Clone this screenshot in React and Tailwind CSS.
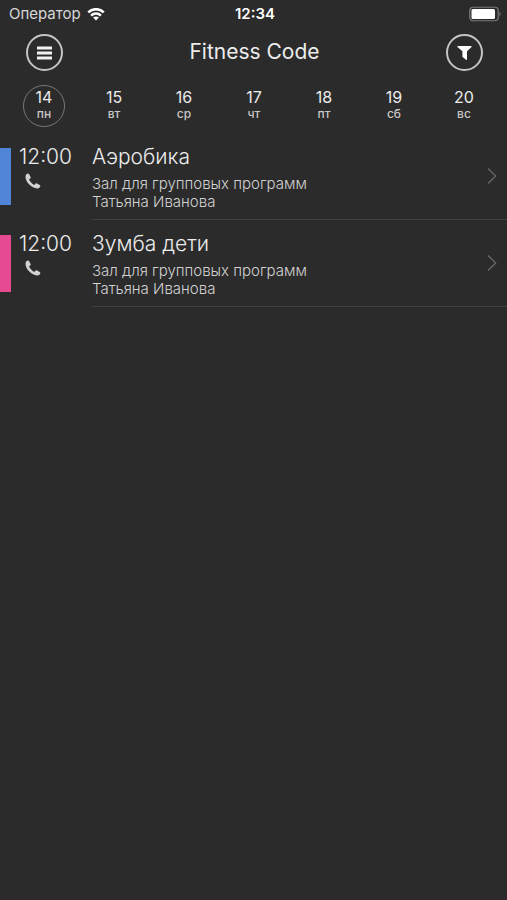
import { useState } from 'react';

const days = [
  { date: 14, name: 'пн' },
  { date: 15, name: 'вт' },
  { date: 16, name: 'ср' },
  { date: 17, name: 'чт' },
  { date: 18, name: 'пт' },
  { date: 19, name: 'сб' },
  { date: 20, name: 'вс' },
];

const classes = [
  {
    id: 1,
    time: '12:00',
    title: 'Аэробика',
    room: 'Зал для групповых программ',
    trainer: 'Татьяна Иванова',
    color: 'bg-[#4f84d6]',
  },
  {
    id: 2,
    time: '12:00',
    title: 'Зумба дети',
    room: 'Зал для групповых программ',
    trainer: 'Татьяна Иванова',
    color: 'bg-[#e64a91]',
  },
];

const WifiIcon = () => (
  <svg className="w-[18px] h-[13px]" viewBox="0 0 18 13" fill="none" stroke="#fff" strokeWidth="2.5" aria-hidden="true">
    <path d="M1.2 4.4C5.6 .1 12.4 .1 16.8 4.4" />
    <path d="M4.1 7.6C6.9 4.9 11.1 4.9 13.9 7.6" />
    <path d="M6.1 9.6C7.7 8.1 10.3 8.1 11.9 9.6L9 12.5Z" fill="#fff" stroke="none" />
  </svg>
);

const BatteryIcon = () => (
  <svg className="w-8 h-4" viewBox="0 0 32 16" aria-hidden="true">
    <rect x="0.75" y="1.25" width="28.5" height="13.5" rx="3.5" fill="none" stroke="#7b7b7b" strokeWidth="1.2" />
    <rect x="2.5" y="3" width="23.5" height="10" rx="1.5" fill="#fff" />
    <path d="M30.5 5.8C32 6.5 32 9.5 30.5 10.2Z" fill="#7b7b7b" />
  </svg>
);

const MenuIcon = () => (
  <svg className="w-[15px] h-[15px]" viewBox="0 0 15 15" fill="none" stroke="#f2f2f2" strokeWidth="2.8" aria-hidden="true">
    <path d="M0 3H15M0 8H15M0 13H15" />
  </svg>
);

const FilterIcon = () => (
  <svg className="w-[15px] h-[17px]" viewBox="0 0 15 17" fill="#fff" aria-hidden="true">
    <path d="M.9 2H14.1Q15 2 14.5 2.9L10 7.2V15.2Q10 16.4 9 15.7L6.2 13.6Q5.4 13.2 5.4 12.6V7.2L.5 2.9Q0 2 .9 2Z" />
  </svg>
);

const PhoneIcon = () => (
  <svg className="w-4 h-4" viewBox="0 0 16 16" fill="#d2d2d2" aria-hidden="true">
    <path d="M.8 2.3C1.2 1.3 2 .7 2.9 .5C3.4 .4 3.7 .6 4 1.1L5.6 3.9C5.9 4.4 5.8 4.8 5.4 5.2L4.4 6.1C4.1 6.4 4.1 6.7 4.3 7.1C5.3 9 6.8 10.6 8.7 11.7C9.1 11.9 9.4 11.9 9.7 11.6L10.7 10.6C11.1 10.2 11.5 10.1 12 10.4L14.8 12.1C15.3 12.4 15.4 12.8 15.3 13.2C15 14.2 14.3 14.9 13.4 15.2C10.5 16 6.8 14 4.3 11.5C1.8 9 -.2 5.2 .8 2.3Z" />
  </svg>
);

const ChevronIcon = () => (
  <svg className="w-[10px] h-4" viewBox="0 0 10 16" fill="none" stroke="#686868" strokeWidth="1.3" aria-hidden="true">
    <path d="M1 .5L8.7 8L1 15.5" />
  </svg>
);

const RoundButton = ({ label, children }) => (
  <button
    type="button"
    aria-label={label}
    className="flex h-[37px] w-[37px] items-center justify-center rounded-full border-2 border-[#c4c4c4]"
  >
    {children}
  </button>
);

const App = () => {
  const [selected, setSelected] = useState(14);

  return (
    <div className="min-h-screen border-b border-[#33262c] bg-[#2b2b2b] font-['Inter','Liberation_Sans',sans-serif] text-[#ececec]">
      <div className="grid h-7 grid-cols-3 items-center pl-[9px] pr-1.5">
        <div className="flex items-center gap-1.5 text-[15px] text-[#d8d8d8]">
          <span>Оператор</span>
          <WifiIcon />
        </div>
        <span className="text-center text-[15px] font-semibold text-white">12:34</span>
        <div className="flex justify-end">
          <BatteryIcon />
        </div>
      </div>

      <header className="flex h-12 items-center justify-between pl-[26px] pr-6">
        <RoundButton label="Меню">
          <MenuIcon />
        </RoundButton>
        <h1 className="text-[21px]">Fitness Code</h1>
        <RoundButton label="Фильтр">
          <FilterIcon />
        </RoundButton>
      </header>

      <nav className="grid grid-cols-7 pl-[9px] pr-2 pt-[9px] pb-1.5">
        {days.map((day) => (
          <button
            key={day.date}
            type="button"
            onClick={() => setSelected(day.date)}
            className={`mx-auto flex h-[42px] w-[42px] flex-col items-center justify-center rounded-full border pb-0.5 ${
              day.date === selected ? 'border-[#777777]' : 'border-transparent'
            }`}
          >
            <span className="text-base leading-[18px]">{day.date}</span>
            <span className="text-xs leading-4 font-medium text-[#c8c8c8]">{day.name}</span>
          </button>
        ))}
      </nav>

      <ul>
        {classes.map((item) => (
          <li key={item.id}>
            <a href={`#class-${item.id}`} className="flex">
              <div className={`my-[15px] w-[11px] ${item.color}`}></div>
              <div className="w-[81px] pt-3 pl-2">
                <div className="text-[21px] leading-6 font-light">{item.time}</div>
                <div className="pt-1 pl-1.5">
                  <PhoneIcon />
                </div>
              </div>
              <div className="flex flex-1 items-center justify-between border-b border-[#404040] pr-2.5">
                <div className="pt-3 pb-2">
                  <h2 className="text-[21px] leading-6 font-light">{item.title}</h2>
                  <p className="pt-1.5 text-[15px] leading-[18px] font-light text-[#d2d2d2]">{item.room}</p>
                  <p className="text-[15px] leading-[18px] font-light text-[#d2d2d2]">{item.trainer}</p>
                </div>
                <ChevronIcon />
              </div>
            </a>
          </li>
        ))}
      </ul>
    </div>
  );
};

export default App;
